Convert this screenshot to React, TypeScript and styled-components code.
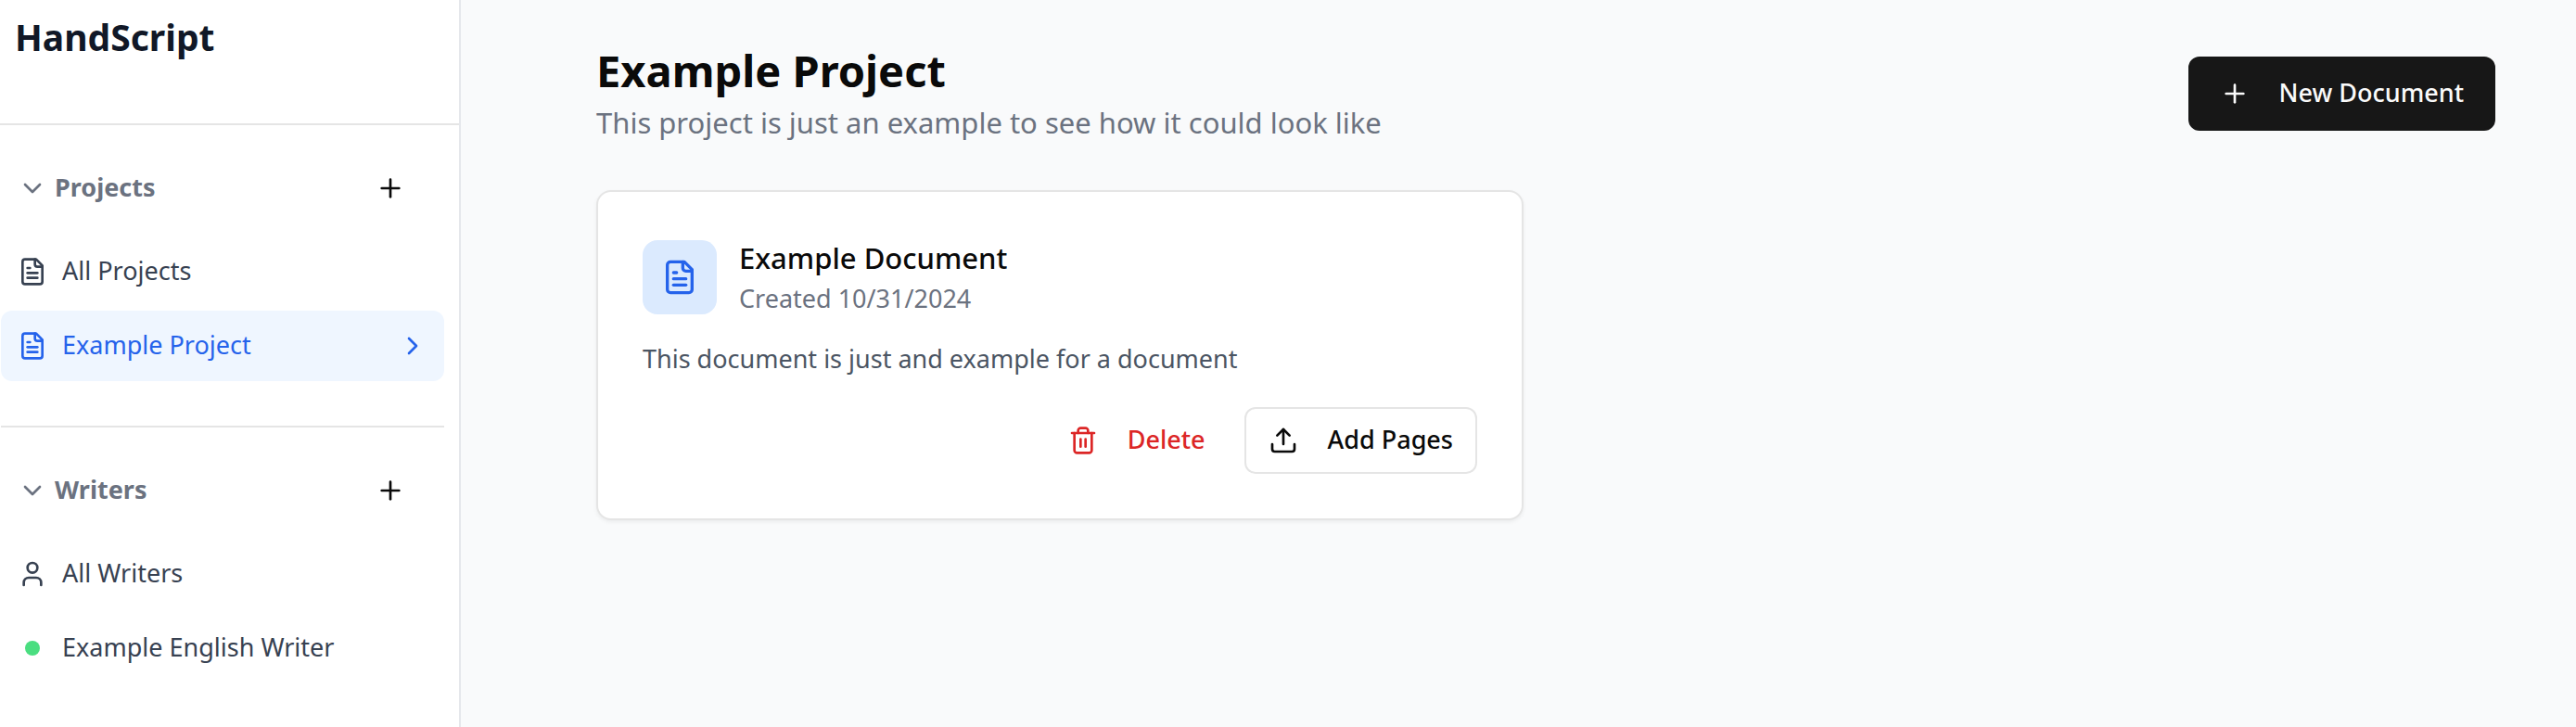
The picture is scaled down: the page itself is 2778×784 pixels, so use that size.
import React from 'react';
import styled, { createGlobalStyle, css } from 'styled-components';

const GlobalStyle = createGlobalStyle`
  *, *::before, *::after { box-sizing: border-box; }
  body {
    margin: 0;
    background: #f9fafb;
    color: #0a0a0a;
    font-family: 'Noto Sans', 'Open Sans', sans-serif;
    font-size: 27px;
    line-height: 40px;
  }
  h1, h2, h3, p, ul { margin: 0; padding: 0; }
  ul { list-style: none; }
  a { color: inherit; text-decoration: none; }
  button {
    margin: 0;
    padding: 0;
    border: 0;
    background: none;
    color: inherit;
    font: inherit;
    cursor: pointer;
  }
`;

const Svg = styled.svg<{ $size?: number }>`
  flex: none;
  width: ${(p) => p.$size ?? 32}px;
  height: ${(p) => p.$size ?? 32}px;
  fill: none;
  stroke: currentColor;
  stroke-width: 2;
  stroke-linecap: round;
  stroke-linejoin: round;
`;

const paths = {
  file: [
    'M15 2H6a2 2 0 0 0-2 2v16a2 2 0 0 0 2 2h12a2 2 0 0 0 2-2V7Z',
    'M14 2v4a2 2 0 0 0 2 2h4',
    'M10 9H8',
    'M16 13H8',
    'M16 17H8',
  ],
  user: ['M19 21v-2a4 4 0 0 0-4-4H9a4 4 0 0 0-4 4v2', 'M8 7a4 4 0 1 0 8 0a4 4 0 1 0-8 0'],
  plus: ['M5 12h14', 'M12 5v14'],
  down: ['m6 9 6 6 6-6'],
  right: ['m9 18 6-6-6-6'],
  trash: [
    'M3 6h18',
    'M19 6v14c0 1-1 2-2 2H7c-1 0-2-1-2-2V6',
    'M8 6V4c0-1 1-2 2-2h4c1 0 2 1 2 2v2',
    'M10 11v6',
    'M14 11v6',
  ],
  upload: ['M21 15v4a2 2 0 0 1-2 2H5a2 2 0 0 1-2-2v-4', 'm17 8-5-5-5 5', 'M12 3v12'],
};

function Icon({ name, size }: { name: keyof typeof paths; size?: number }) {
  return (
    <Svg viewBox="0 0 24 24" $size={size} aria-hidden="true">
      {paths[name].map((d) => (
        <path key={d} d={d} />
      ))}
    </Svg>
  );
}

const Shell = styled.div`
  display: flex;
  min-height: 100vh;
`;

const Sidebar = styled.aside`
  flex: 0 0 497px;
  background: #fff;
  border-right: 2px solid #e5e7eb;
`;

const Brand = styled.div`
  height: 135px;
  padding: 12px 16px;
  border-bottom: 2px solid #e5e5e5;
  color: #111827;
  font-size: 39px;
  font-weight: 700;
  line-height: 56px;
`;

const Nav = styled.nav`
  padding: 0 16px 0 1px;
`;

const Section = styled.section`
  padding: 48px 0;
  & + & { border-top: 2px solid #e5e5e5; }
`;

const SectionHead = styled.div`
  display: flex;
  align-items: center;
  justify-content: space-between;
  margin-bottom: 32px;
  padding: 0 38px 0 18px;
`;

const SectionToggle = styled.button`
  display: flex;
  align-items: center;
  gap: 8px;
  color: #6b7280;
  font-weight: 700;
`;

const IconButton = styled.button`
  display: grid;
  place-items: center;
  width: 40px;
  height: 40px;
`;

const NavList = styled.ul`
  display: grid;
  gap: 4px;
`;

const NavLink = styled.a<{ $active?: boolean }>`
  display: flex;
  align-items: center;
  gap: 16px;
  height: 76px;
  padding: 0 18px;
  border-radius: 12px;
  color: #374151;
  ${(p) => p.$active && css`
    background: #eff6ff;
    color: #2563eb;
  `}
`;

const Label = styled.span`
  flex: 1;
  padding-bottom: 2px;
  line-height: 36px;
`;

const Dot = styled.span`
  width: 16px;
  height: 16px;
  margin: 0 8px;
  border-radius: 50%;
  background: #4ade80;
`;

const Main = styled.main`
  flex: 1;
  min-width: 0;
  padding: 45px 87px 48px 146px;
`;

const PageHead = styled.header`
  display: flex;
  align-items: center;
  justify-content: space-between;
  margin-bottom: 48px;
`;

const PageTitle = styled.h1`
  font-size: 47px;
  font-weight: 700;
  line-height: 62px;
`;

const PageLead = styled.p`
  color: #6b7280;
  font-size: 31px;
  line-height: 50px;
`;

const Button = styled.button<{ $kind: 'primary' | 'outline' | 'danger' }>`
  display: inline-flex;
  align-items: center;
  gap: 32px;
  height: 72px;
  padding: 0 24px;
  border: 2px solid transparent;
  border-radius: 12px;
  font-weight: 500;
  white-space: nowrap;
  ${(p) => p.$kind === 'primary' && css`
    height: 80px;
    padding: 0 32px;
    background: #171717;
    border-color: #171717;
    color: #fafafa;
  `}
  ${(p) => p.$kind === 'outline' && css`
    background: #fff;
    border-color: #e5e5e5;
  `}
  ${(p) => p.$kind === 'danger' && css`
    color: #dc2626;
  `}
`;

const Cards = styled.div`
  display: grid;
  grid-template-columns: repeat(2, minmax(0, 1fr));
  gap: 48px;
`;

const Card = styled.article`
  padding: 48px;
  border: 2px solid #e5e5e5;
  border-radius: 16px;
  background: #fff;
  box-shadow: 0 2px 4px rgba(0, 0, 0, 0.06);
`;

const CardHead = styled.div`
  display: flex;
  align-items: center;
  gap: 24px;
  margin-bottom: 24px;
`;

const Tile = styled.div`
  display: grid;
  place-items: center;
  width: 80px;
  height: 80px;
  border-radius: 16px;
  background: #dbeafe;
  color: #2563eb;
`;

const CardTitle = styled.h2`
  font-size: 31px;
  font-weight: 500;
  line-height: 46px;
`;

const CardMeta = styled.p`
  color: #6b7280;
  line-height: 42px;
`;

const CardText = styled.p`
  margin-bottom: 32px;
  color: #4b5563;
`;

const CardActions = styled.div`
  display: flex;
  justify-content: flex-end;
  gap: 16px;
`;

export default function App() {
  return (
    <Shell>
      <GlobalStyle />
      <Sidebar>
        <Brand>HandScript</Brand>
        <Nav>
          <Section>
            <SectionHead>
              <SectionToggle aria-expanded="true"><Icon name="down" /><Label>Projects</Label></SectionToggle>
              <IconButton aria-label="Add project"><Icon name="plus" /></IconButton>
            </SectionHead>
            <NavList>
              <li><NavLink href="#projects"><Icon name="file" /><Label>All Projects</Label></NavLink></li>
              <li>
                <NavLink href="#example-project" $active aria-current="page">
                  <Icon name="file" /><Label>Example Project</Label><Icon name="right" />
                </NavLink>
              </li>
            </NavList>
          </Section>
          <Section>
            <SectionHead>
              <SectionToggle aria-expanded="true"><Icon name="down" /><Label>Writers</Label></SectionToggle>
              <IconButton aria-label="Add writer"><Icon name="plus" /></IconButton>
            </SectionHead>
            <NavList>
              <li><NavLink href="#writers"><Icon name="user" /><Label>All Writers</Label></NavLink></li>
              <li><NavLink href="#english-writer"><Dot /><Label>Example English Writer</Label></NavLink></li>
            </NavList>
          </Section>
        </Nav>
      </Sidebar>
      <Main>
        <PageHead>
          <div>
            <PageTitle>Example Project</PageTitle>
            <PageLead>This project is just an example to see how it could look like</PageLead>
          </div>
          <Button $kind="primary"><Icon name="plus" /><Label>New Document</Label></Button>
        </PageHead>
        <Cards>
          <Card>
            <CardHead>
              <Tile><Icon name="file" size={40} /></Tile>
              <div>
                <CardTitle>Example Document</CardTitle>
                <CardMeta>Created 10/31/2024</CardMeta>
              </div>
            </CardHead>
            <CardText>This document is just and example for a document</CardText>
            <CardActions>
              <Button $kind="danger"><Icon name="trash" /><Label>Delete</Label></Button>
              <Button $kind="outline"><Icon name="upload" /><Label>Add Pages</Label></Button>
            </CardActions>
          </Card>
        </Cards>
      </Main>
    </Shell>
  );
}
